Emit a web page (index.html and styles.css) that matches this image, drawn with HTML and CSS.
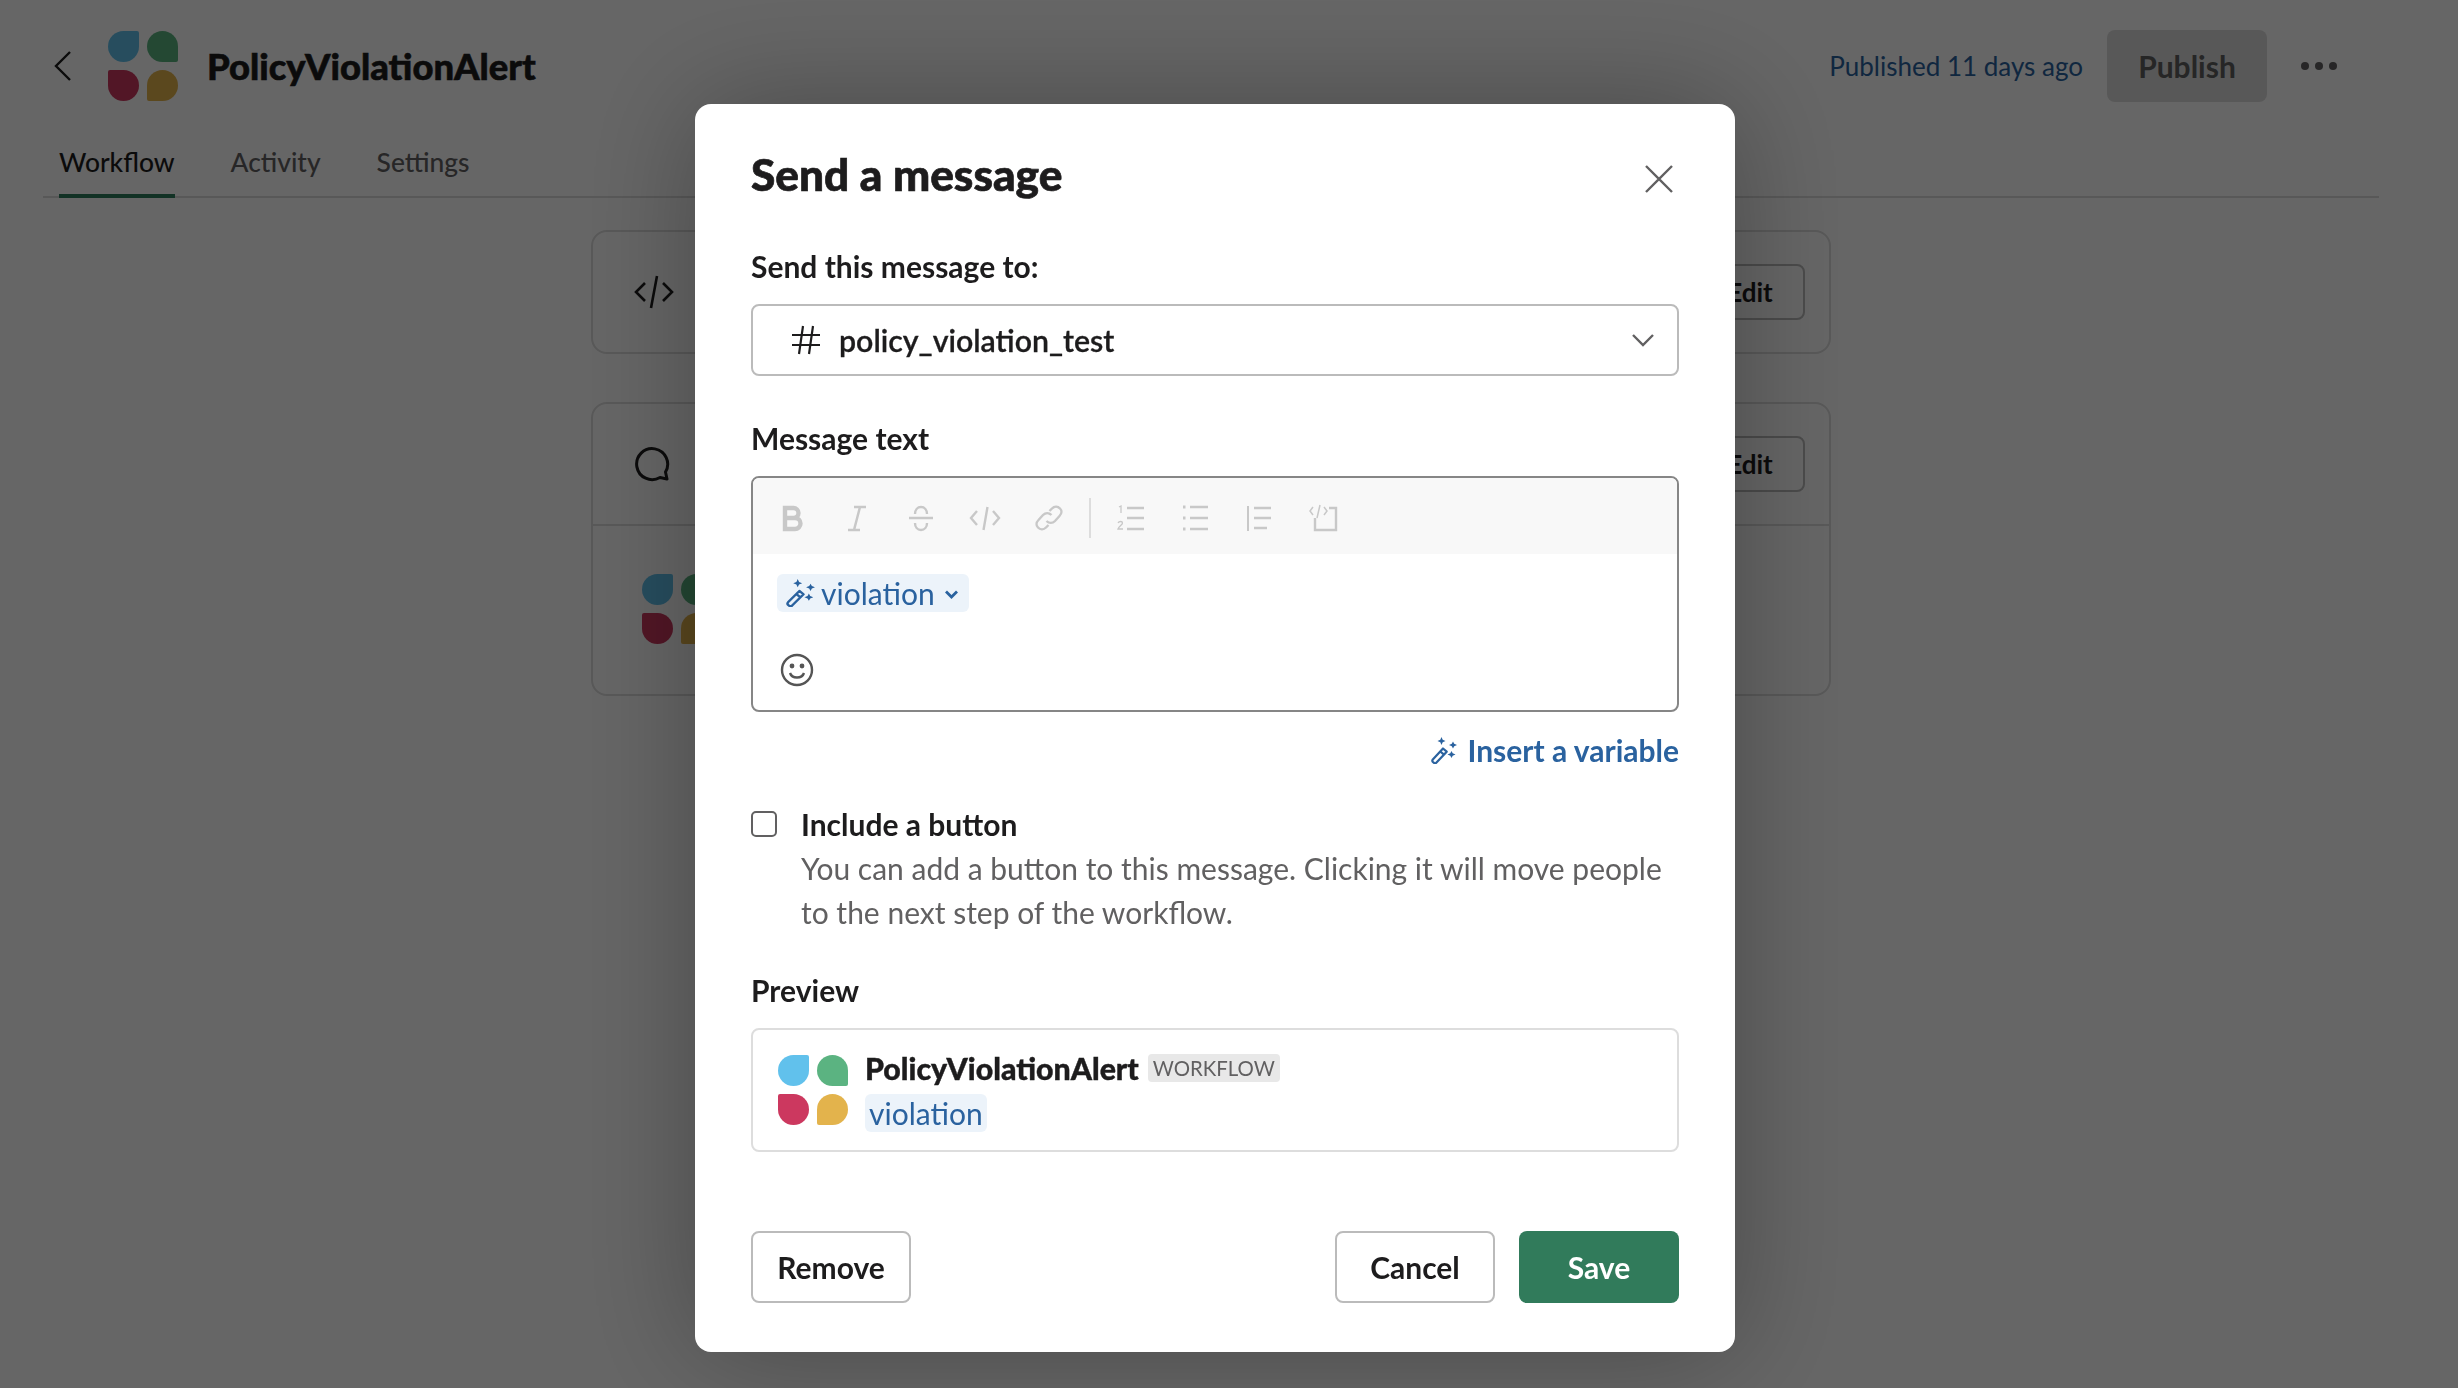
FILE: index.html
```html
<!DOCTYPE html>
<html lang="en">
<head>
    <meta charset="UTF-8">
    <meta name="viewport" content="width=device-width, initial-scale=1.0">
    <title>PolicyViolationAlert</title>
    <link rel="stylesheet" href="styles.css">
</head>
<body>

    <svg class="defs" width="0" height="0">
        <symbol id="wand" viewBox="0 0 26 27">
            <g fill="none" stroke="currentColor" stroke-width="2.200" stroke-linejoin="round">
                <path d="M1.800 22.500 12 11.500l3.700 3.200L5.500 25.600a1.800 1.800 0 0 1-2.500.2l-.9-.7a1.900 1.900 0 0 1-.3-2.600Z"/>
                <path d="m9.300 14.500 3.700 3.200"/>
            </g>
            <g fill="currentColor">
                <path d="m10.500 0 1.200 2.800 2.800 1.200-2.800 1.200-1.200 2.800-1.200-2.800L6.500 4l2.800-1.200Z"/>
                <path d="m22 4.500 1.200 2.300 2.800 1.200-2.800 1.200L22 11.500l-1.200-2.300L18 8l2.800-1.200Z"/>
                <path d="m20.500 14 1.200 2.300 2.800 1.200-2.800 1.200-1.200 2.300-1.200-2.300-2.800-1.200 2.800-1.200Z"/>
            </g>
        </symbol>
    </svg>

    <div class="page">
        <header class="topbar">
            <svg class="back" viewBox="0 0 18 32" width="18" height="32"><path d="M16 2 2 16l14 14" fill="none" stroke="currentColor" stroke-width="2.400"/></svg>
            <div class="logo"><span class="blue"></span><span class="green"></span><span class="red"></span><span class="yellow"></span></div>
            <h1 class="app_name">PolicyViolationAlert</h1>
            <span class="published">Published 11 days ago</span>
            <button class="publish">Publish</button>
            <div class="more"><i></i><i></i><i></i></div>
        </header>

        <nav class="tabs">
            <a class="tab active">Workflow</a>
            <a class="tab">Activity</a>
            <a class="tab">Settings</a>
        </nav>

        <main class="steps">
            <section class="card">
                <div class="card_row">
                    <svg class="step_icon" viewBox="0 0 40 34" width="40" height="34"><path d="M11 8 2 17l9 9M29 8l9 9-9 9M23 1l-6 32" fill="none" stroke="currentColor" stroke-width="2.600"/></svg>
                    <button class="edit">Edit</button>
                </div>
            </section>
            <section class="card">
                <div class="card_row">
                    <svg class="step_icon" viewBox="0 0 36 36" width="36" height="36"><path d="M33 33l-7-1.500A15.500 15.500 0 1 1 31.500 26Z" fill="none" stroke="currentColor" stroke-width="3" stroke-linejoin="round"/></svg>
                    <button class="edit">Edit</button>
                </div>
                <div class="card_body">
                    <div class="logo"><span class="blue"></span><span class="green"></span><span class="red"></span><span class="yellow"></span></div>
                </div>
            </section>
        </main>
    </div>

    <div class="overlay">
        <form class="modal">
            <div class="modal_head">
                <h2>Send a message</h2>
                <svg class="close" viewBox="0 0 30 30" width="30" height="30"><path d="M2 2l26 26M28 2 2 28" fill="none" stroke="currentColor" stroke-width="2.400"/></svg>
            </div>

            <label class="field_label">Send this message to:</label>
            <div class="select">
                <svg class="hash" viewBox="0 0 30 30" width="30" height="30"><path d="M1 10h28M1 20h28M12 1 8 29M22 1l-4 28" fill="none" stroke="currentColor" stroke-width="2.200"/></svg>
                <span class="select_value">policy_violation_test</span>
                <svg class="caret" viewBox="0 0 24 14" width="24" height="14"><path d="M2 2l10 10L22 2" fill="none" stroke="currentColor" stroke-width="2.400"/></svg>
            </div>

            <label class="field_label message_label">Message text</label>
            <div class="editor">
                <div class="toolbar">
                    <svg class="tool" viewBox="0 0 36 36"><path d="M10 8h8.500a5 5 0 0 1 0 10H10Zm0 10h10a5.500 5.500 0 0 1 0 11H10Z" fill="none" stroke="currentColor" stroke-width="4.400"/></svg>
                    <svg class="tool" viewBox="0 0 36 36"><path d="M15 7h12M9 30h12M21 7l-6 23" fill="none" stroke="currentColor" stroke-width="2.500"/></svg>
                    <svg class="tool" viewBox="0 0 36 36"><path d="M6 18h24M24 14c0-4-2.500-7-6-7s-6 3-6 7M24 23c0 4-2.500 7-6 7s-6-3-6-7" fill="none" stroke="currentColor" stroke-width="2.400"/></svg>
                    <svg class="tool" viewBox="0 0 36 36"><path d="M10 11l-6 7 6 7M26 11l6 7-6 7M20.500 7l-4 23" fill="none" stroke="currentColor" stroke-width="2.400"/></svg>
                    <svg class="tool" viewBox="0 0 36 36"><path d="M15.500 21c2.500 2.500 6 2.500 8.500 0l4.500-5c2.500-2.500 2.500-5.500.5-7.500s-5.500-2.500-8 0l-2.500 2.500M20.500 15c-2.500-2.500-6-2.500-8.500 0l-4.500 5c-2.500 2.500-2.500 5.500-.5 7.500s5.500 2.500 8 0l2.500-2.500" fill="none" stroke="currentColor" stroke-width="2.400"/></svg>
                    <span class="tool_sep"></span>
                    <svg class="tool" viewBox="0 0 36 36"><path d="M14 8h17M14 18h17M14 29h17" fill="none" stroke="currentColor" stroke-width="2.400"/><path d="M6 7l2-1v7M5 23c1-2 4.500-2 4.500 0s-3.500 3-4.500 6h5" fill="none" stroke="currentColor" stroke-width="1.300"/></svg>
                    <svg class="tool" viewBox="0 0 36 36"><path d="M13 7h18M13 18h18M13 29h18" fill="none" stroke="currentColor" stroke-width="2.400"/><path d="M6 7h2.500M6 18h2.500M6 29h2.500" stroke="currentColor" stroke-width="3"/></svg>
                    <svg class="tool" viewBox="0 0 36 36"><path d="M7 6v25" stroke="currentColor" stroke-width="2"/><path d="M13 8h17M13 18h17M13 28h13" fill="none" stroke="currentColor" stroke-width="2.400"/></svg>
                    <svg class="tool" viewBox="0 0 36 36"><path d="M24 8h7v22H10V18" fill="none" stroke="currentColor" stroke-width="2.400"/><path d="M8 7 5 11l3 4M19 7l3 4-3 4M15 5l-3 13" fill="none" stroke="currentColor" stroke-width="1.500"/></svg>
                </div>
                <div class="editor_body">
                    <span class="chip">
                        <svg class="wand" width="29" height="28" viewBox="0 0 26 27" preserveAspectRatio="none"><use href="#wand"/></svg>
                        <span>violation</span>
                        <svg class="chip_caret" viewBox="0 0 15 9" width="15" height="9"><path d="M2 1.500l5.500 5.500L13 1.500" fill="none" stroke="currentColor" stroke-width="2.800"/></svg>
                    </span>
                    <svg class="smile" viewBox="0 0 34 34" width="34" height="34">
                        <circle cx="17" cy="17" r="15" fill="none" stroke="currentColor" stroke-width="2.400"/>
                        <circle cx="12" cy="13" r="2.400" fill="currentColor"/>
                        <circle cx="22" cy="13" r="2.400" fill="currentColor"/>
                        <path d="M10 20c2 6 12 6 14 0" fill="none" stroke="currentColor" stroke-width="2.400"/>
                    </svg>
                </div>
            </div>

            <div class="insert_row">
                <a class="insert">
                    <svg width="26" height="27"><use href="#wand"/></svg>
                    Insert a variable
                </a>
            </div>

            <div class="check_row">
                <span class="checkbox"></span>
                <div>
                    <div class="check_title">Include a button</div>
                    <p class="check_desc">You can add a button to this message. Clicking it will move people to the next step of the workflow.</p>
                </div>
            </div>

            <label class="field_label preview_label">Preview</label>
            <div class="preview">
                <div class="logo"><span class="blue"></span><span class="green"></span><span class="red"></span><span class="yellow"></span></div>
                <div class="preview_text">
                    <div class="preview_name"><strong>PolicyViolationAlert</strong><span class="badge">WORKFLOW</span></div>
                    <span class="preview_chip">violation</span>
                </div>
            </div>

            <div class="actions">
                <button type="button" class="btn">Remove</button>
                <button type="button" class="btn cancel">Cancel</button>
                <button type="button" class="btn save">Save</button>
            </div>
        </form>
    </div>

</body>
</html>
```

FILE: styles.css
```css
* {
    box-sizing: border-box;
}
html, body {
    margin: 0;
    height: 100%;
    overflow: hidden;
}
body {
    background-color: #fff;
    color: #1d1c1d;
    font-family: Lato, "Open Sans", sans-serif;
    font-size: 30px;
}
button {
    font-family: inherit;
}
h1, h2, p {
    margin: 0;
}
.defs {
    display: block;
    height: 0;
}

/* page behind the modal */
.page {
    height: 100%;
}
.topbar {
    display: flex;
    align-items: center;
    height: 132px;
    padding: 30px 0 30px 54px;
}
.back {
    flex: none;
    margin-right: 36px;
}
.logo {
    display: grid;
    flex: none;
    grid-template-columns: 31px 31px;
    grid-template-rows: 31px 31px;
    gap: 8px;
}
.logo span {
    display: block;
}
.logo .blue {
    background-color: #61c1ec;
    border-radius: 50% 2px 50% 50%;
}
.logo .green {
    background-color: #5bb381;
    border-radius: 50% 50% 2px 50%;
}
.logo .red {
    background-color: #cc385f;
    border-radius: 2px 50% 50% 50%;
}
.logo .yellow {
    background-color: #e3b34c;
    border-radius: 50% 50% 50% 2px;
}
.app_name {
    flex: 1;
    margin-left: 29px;
    font-size: 36.400px;
    font-weight: 900;
    -webkit-text-stroke: 0.6px;
}
.published {
    margin-right: 24px;
    color: #2a629f;
    font-size: 26px;
}
.publish {
    width: 160px;
    height: 72px;
    border: none;
    border-radius: 8px;
    background-color: #dcdcdc;
    color: #5f5f5f;
    font-size: 30px;
    font-weight: 700;
}
.more {
    display: flex;
    gap: 6px;
    margin: 0 121px 0 34px;
}
.more i {
    width: 8px;
    height: 8px;
    border-radius: 50%;
    background-color: #616061;
}
.tabs {
    display: flex;
    gap: 56px;
    height: 66px;
    margin: 0 79px 0 43px;
    padding-left: 16px;
    border-bottom: 2px solid #ddd;
}
.tab {
    height: 66px;
    padding-top: 14px;
    color: #616061;
    font-size: 26.400px;
    font-weight: 500;
}
.tab.active {
    border-bottom: 4px solid #2f7d5e;
    color: #1d1c1d;
}
.steps {
    width: 1240px;
    margin: 32px 0 0 591px;
}
.card {
    margin-bottom: 48px;
    border: 2px solid #ddd;
    border-radius: 16px;
}
.card_row {
    display: flex;
    align-items: center;
    justify-content: space-between;
    height: 120px;
    padding: 0 24px 0 41px;
}
.edit {
    width: 110px;
    height: 56px;
    border: 2px solid #bbb;
    border-radius: 8px;
    background-color: #fff;
    color: #1d1c1d;
    font-size: 26px;
    font-weight: 700;
}
.card_body {
    height: 170px;
    padding: 48px 0 0 49px;
    border-top: 2px solid #ddd;
}

/* modal */
.overlay {
    position: fixed;
    top: 0;
    left: 0;
    right: 0;
    bottom: 0;
    display: flex;
    justify-content: center;
    align-items: flex-start;
    padding: 104px 28px 0 0;
    background-color: rgba(0, 0, 0, 0.6);
}
.modal {
    width: 1040px;
    height: 1248px;
    padding: 42px 56px 0;
    border-radius: 16px;
    background-color: #fff;
    box-shadow: 0 0 120px rgba(0, 0, 0, 0.3);
}
.modal_head {
    display: flex;
    align-items: center;
    justify-content: space-between;
    height: 56px;
    margin-bottom: 42px;
}
.modal_head h2 {
    font-size: 44.200px;
    font-weight: 900;
    line-height: 56px;
    -webkit-text-stroke: 0.7px;
}
.close {
    margin: 10px 5px 0 0;
    color: #616061;
}
.field_label {
    display: block;
    font-weight: 700;
    line-height: 44px;
}
.select {
    display: flex;
    align-items: center;
    height: 72px;
    margin-top: 16px;
    padding: 0 22px 0 38px;
    border: 2px solid #bbb;
    border-radius: 8px;
}
.hash {
    margin-right: 18px;
}
.select_value {
    flex: 1;
    font-size: 30.300px;
    font-weight: 600;
    -webkit-text-stroke: 0.3px;
}
.caret {
    color: #616061;
}
.message_label {
    margin-top: 40px;
}
.editor {
    height: 236px;
    margin-top: 16px;
    border: 2px solid #868686;
    border-radius: 8px;
    overflow: hidden;
}
.toolbar {
    display: flex;
    align-items: center;
    gap: 28px;
    height: 76px;
    padding: 3px 0 0 22px;
    background-color: #f8f8f8;
    color: #c8c8c8;
}
.tool {
    width: 36px;
    height: 36px;
}
.tool_sep {
    width: 2px;
    height: 40px;
    margin: 0 -6px;
    background-color: #ddd;
}
.editor_body {
    display: flex;
    flex-direction: column;
    align-items: flex-start;
    gap: 41px;
    padding: 20px 0 0 24px;
}
.chip {
    display: inline-flex;
    align-items: center;
    height: 38px;
    padding: 0 10px 0 9px;
    border-radius: 6px;
    background-color: #ecf3fa;
    color: #2a629f;
}
.wand {
    margin-right: 6px;
}
.chip_caret {
    margin: 2px 0 0 9px;
}
.smile {
    margin-left: 3px;
    color: #555;
}
.insert_row {
    display: flex;
    justify-content: flex-end;
    margin-top: 16px;
}
.insert {
    display: flex;
    align-items: center;
    gap: 11px;
    color: #2a629f;
    font-weight: 700;
    line-height: 44px;
}
.check_row {
    display: flex;
    margin-top: 30px;
}
.checkbox {
    flex: none;
    width: 26px;
    height: 26px;
    margin: 9px 24px 0 0;
    border: 2px solid #616061;
    border-radius: 5px;
}
.check_title {
    font-weight: 700;
    line-height: 44px;
}
.check_desc {
    color: #616061;
    line-height: 44px;
}
.preview_label {
    margin-top: 34px;
}
.preview {
    display: flex;
    height: 124px;
    margin-top: 16px;
    padding: 25px 25px 0;
    border: 2px solid #ddd;
    border-radius: 8px;
}
.preview_text {
    margin: -5px 0 0 17px;
}
.preview_name {
    display: flex;
    align-items: center;
    height: 36px;
}
.preview_name strong {
    font-size: 30.300px;
    font-weight: 900;
    -webkit-text-stroke: 0.4px;
}
.badge {
    height: 28px;
    margin-left: 9px;
    padding: 0 5px;
    border-radius: 4px;
    background-color: #e8e8e8;
    color: #616061;
    font-size: 20.400px;
    line-height: 28px;
}
.preview_chip {
    display: inline-block;
    height: 38px;
    margin-top: 8px;
    padding: 0 4px;
    border-radius: 6px;
    background-color: #ecf3fa;
    color: #2a629f;
    line-height: 38px;
}
.actions {
    display: flex;
    justify-content: flex-end;
    gap: 24px;
    margin-top: 79px;
}
.btn {
    width: 160px;
    height: 72px;
    border: 2px solid #bbb;
    border-radius: 8px;
    background-color: #fff;
    color: #1d1c1d;
    font-size: 30px;
    font-weight: 700;
}
.btn:first-child {
    margin-right: auto;
}
.save {
    border: none;
    background-color: #317b5b;
    color: #fff;
}
```
